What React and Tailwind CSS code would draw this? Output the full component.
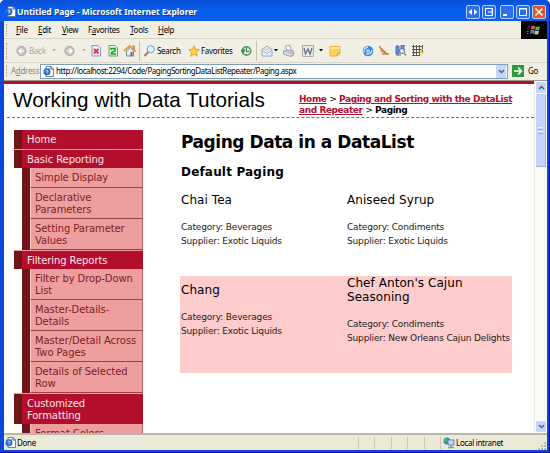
import React from "react";

function PageIcon({ className = "" }) {
  return (
    <svg className={"shrink-0 " + className} width="11" height="11" viewBox="0 0 11 11">
      <path d="M3 .5h5l2.500 2.500v7.500H3z" fill="#fff" stroke="#777f8c" />
      <path d="M8 .5V3h2.500" fill="none" stroke="#555e70" />
      <circle cx="4" cy="5.800" r="2.600" fill="none" stroke="#1764d8" strokeWidth="1.700" />
      <path d="M2 6h4.500" stroke="#1764d8" strokeWidth="1.200" />
      <path d="M.5 7.500C1 4 5 2 7.500 3" fill="none" stroke="#4b9bf0" strokeWidth=".9" />
    </svg>
  );
}

function Grip({ className = "" }) {
  return <div className={"w-px shrink-0 border-l border-dotted border-[#a5a293] " + className} />;
}

function TitleButton({ red, children, className = "" }) {
  return (
    <div className={"h-[14px] w-[14px] shrink-0 rounded-[2px] border border-[#b9cffb] " + (red ? "bg-[#e4552f] " : "bg-[#2c6fee] ") + className}>
      <svg width="12" height="12" viewBox="0 0 12 12" fill="none" stroke="#fff">{children}</svg>
    </div>
  );
}

function TitleBar() {
  return (
    <div className="flex h-[21px] shrink-0 items-center rounded-t-[5px] bg-linear-to-b from-[#0a4fd8] via-[#0560f0] to-[#0a5bea] pl-[5px] pt-[2px] text-white">
      <PageIcon />
      <div className="ml-px w-[183px] whitespace-nowrap font-['Noto_Sans','Open_Sans',sans-serif] text-[8.5px] font-bold leading-3 tracking-[-0.020px] [text-shadow:1px_1px_0_#0a3a9e]">
        Untitled Page - Microsoft Internet Explorer
      </div>
      <div className="ml-auto mr-[3px] flex">
        <TitleButton><path d="M5 3v6L1.500 6zM7 3v6l3.500-3z" fill="#fff" stroke="none" /></TitleButton>
        <TitleButton className="ml-[2px]"><path d="M2 2.500h8M2.500 2v7.500h7V7M9.500 2v3M5 6h5M8.500 4.500L10 6 8.500 7.500" /></TitleButton>
        <TitleButton className="ml-[4px]"><path d="M2 9h4" strokeWidth="2" /></TitleButton>
        <TitleButton className="ml-[2px]"><path d="M2.500 2.500h7v7h-7zM2 3h8" /></TitleButton>
        <TitleButton red className="ml-[2px]"><path d="M2.500 2.500l7 7M9.500 2.500l-7 7" strokeWidth="1.500" /></TitleButton>
      </div>
    </div>
  );
}

function MenuBar() {
  return (
    <div className="flex h-[18px] shrink-0 items-center border-b border-[#d9d6c6] pl-[2px]">
      <Grip className="h-3" />
      <div className="ml-[9px] flex w-[210px] whitespace-nowrap leading-3">
        <div className="w-[22px]"><u>F</u>ile</div>
        <div className="w-[24px]"><u>E</u>dit</div>
        <div className="w-[26px]"><u>V</u>iew</div>
        <div className="w-[42px]">F<u>a</u>vorites</div>
        <div className="w-[28px]"><u>T</u>ools</div>
        <div><u>H</u>elp</div>
      </div>
      <div className="-mb-px ml-auto flex h-[18px] w-[26px] items-center justify-center bg-black">
        <svg width="14" height="13" viewBox="0 0 14 13">
          <path d="M4.500 2q2-1 4 0l-.7 3.500q-2-1-4 0z" fill="#c55a45" />
          <path d="M9 2.200q2 1 4 0l-.8 3.500q-2 1-4 0z" fill="#4fb853" />
          <path d="M3.700 6.300q2-1 4 0L7 9.800q-2-1-4 0z" fill="#5680dc" />
          <path d="M8.100 6.500q2 1 4 0l-.8 3.500q-2 1-4 0z" fill="#d9c65a" />
          <path d="M.8 3h2M.4 5h2M0 7.500h2M0 9.500h2" stroke="#94638e" strokeDasharray="1 .6" />
        </svg>
      </div>
    </div>
  );
}

function Arrow({ gray, className = "" }) {
  return <svg className={"shrink-0 " + className} width="4" height="3" viewBox="0 0 4 3"><path d="M0 0h4L2 2.500z" fill={gray ? "#b3b1a6" : "#000"} /></svg>;
}

function Ico({ children, className = "" }) {
  return <svg className={"shrink-0 " + className} width="12" height="12" viewBox="0 0 12 12">{children}</svg>;
}

function Toolbar() {
  return (
    <div className="flex h-[24px] shrink-0 items-center whitespace-nowrap border-b border-[#d9d6c6] pl-[2px]">
      <Grip className="h-4" />
      <Ico className="ml-[9px]"><circle cx="5.500" cy="6" r="4.600" fill="#c2c1ba" stroke="#aaa9a2" /><path d="M8 6H3.500M5.500 3.500L3 6l2.500 2.500" fill="none" stroke="#fff" strokeWidth="1.500" /></Ico>
      <div className="ml-[1px] w-[20px] text-[#aaa99d]">Back</div>
      <Arrow gray className="ml-[3px]" />
      <Ico className="ml-[8px]"><circle cx="5.500" cy="6" r="4.600" fill="#c2c1ba" stroke="#aaa9a2" /><path d="M3 6h4.500M5.500 3.500L8 6 5.500 8.500" fill="none" stroke="#fff" strokeWidth="1.500" /></Ico>
      <Arrow gray className="ml-[6px]" />
      <Ico className="ml-[5px]"><path d="M1 .5h6L9.500 3v8H1z" fill="#e9f0ff" stroke="#7e9bce" /><path d="M3 4l4.500 4.500M7.500 4L3 8.500" stroke="#e33" strokeWidth="1.900" /></Ico>
      <Ico className="ml-[5px]"><path d="M1 .5h6L9.500 3v8H1z" fill="#eaffea" stroke="#55a763" /><path d="M3 5V3.500h4V6L3.500 7.500V9H8" fill="none" stroke="#149929" strokeWidth="1.500" /></Ico>
      <Ico className="ml-[4px]"><path d="M2.500 6v5h7V6L6.500 2.500z" fill="#e2ebff" stroke="#6c86b6" /><path d="M0 6L5.500 1 12 6.500" fill="none" stroke="#e99c35" strokeWidth="1.800" /><path d="M8.500 1h1.500v3" stroke="#b04b32" fill="none" /><path d="M6.500 7h2v4h-2z" fill="#9b6137" /></Ico>
      <div className="ml-[3px] h-5 w-px shrink-0 bg-[#c7c4b4]" />
      <Ico className="ml-[4px]"><path d="M4.500 7L.5 11" stroke="#a9794c" strokeWidth="2" /><circle cx="6.800" cy="4.200" r="3.600" fill="#d8f0ff" stroke="#6e9bd5" /><path d="M5 4q.5-2 2-2" stroke="#fff" fill="none" /></Ico>
      <div className="ml-px w-[26px]">Search</div>
      <Ico className="ml-[5px]"><path d="M6 .7l1.500 3.500 4 .4-3 2.700.9 4L6 9.200l-3.400 2.100.9-4-3-2.700 4-.4z" fill="#ffd34d" stroke="#d99a24" strokeWidth=".8" /></Ico>
      <div className="ml-px w-[34px]">Favorites</div>
      <Ico className="ml-[5px]"><circle cx="6.500" cy="6" r="4.200" fill="#e3f4e3" stroke="#59a061" strokeWidth="1.800" /><path d="M6.500 3v3.500H9" fill="none" stroke="#445566" /><path d="M.5 5l3 3.500L5.500 4z" fill="#219b35" /></Ico>
      <div className="ml-[4px] h-5 w-px shrink-0 bg-[#c7c4b4]" />
      <Ico className="ml-[4px]"><path d="M1 4.500L6 1l5 3.500V11H1z" fill="#e7f1ff" stroke="#8aa9d2" /><path d="M1 5l5 3.500L11 5" fill="#fff" stroke="#8aa9d2" /><path d="M3 3h6v2L6 7 3 5z" fill="#e5d3c6" /></Ico>
      <Arrow className="ml-px" />
      <Ico className="ml-[5px]"><path d="M2.500 1l4.500-.5 1.500 5H3.500z" fill="#fff" stroke="#8ba7cc" /><path d="M.5 6l2-1H9l1.500 2v3L8 11.500.5 9z" fill="#c2c5cb" stroke="#969ca7" /><path d="M1.500 8l6 2" stroke="#fff" /></Ico>
      <Ico className="ml-[7px]"><path d="M.5.5h11v11H.5z" fill="#e9e9e9" stroke="#aaa" /><path d="M2 3l1.500 6L6 4l2 5 2-6" fill="none" stroke="#6b717d" strokeWidth="1.300" /></Ico>
      <Arrow className="ml-[5px]" />
      <Ico className="ml-[6px]"><path d="M1 1.500h10v7L8.500 11H1z" fill="#ffd15c" stroke="#e6b341" /><path d="M1.500 2h9v2h-9z" fill="#ffe99a" /><path d="M8.500 11V8.500H11" fill="#fff0b8" stroke="#d6a32d" /></Ico>
      <Ico className="ml-[21px]"><circle cx="6" cy="6" r="5.300" fill="#3c84d8" /><path d="M2 8Q1 3 6 2M4 9q5 1 6-4" fill="none" stroke="#c5e6ff" strokeWidth="1.300" /><circle cx="6" cy="6" r="2" fill="#9dd1ff" /></Ico>
      <Ico className="ml-[4px]"><path d="M1 1l2 6 8 3-4-4-3-1z" fill="#df9348" /><path d="M1 1l7 7M4 9h7" stroke="#a36229" fill="none" /></Ico>
      <Ico className="ml-[5px]"><path d="M1 1h3v8H1zM6 0h3v5H6z" fill="#6c93c9" stroke="#4b6c9c" /><circle cx="7" cy="6" r="2.500" fill="#ddeeff" stroke="#4677b6" /><path d="M9 8l2 2.500" stroke="#b59142" strokeWidth="1.800" /><path d="M1 10h5" stroke="#4b6c9c" /></Ico>
      <Ico className="ml-[5px]"><path d="M0 1.500h11M0 4.500h11M0 7.500h11M0 10.500h7M1.500 0v11M4.500 0v11M7.500 0v11M10.500 0v8" stroke="#4c4c46" strokeWidth=".9" /><path d="M10 4L7.500 8H10l-2 4 4-5H9.500L11 4z" fill="#f5c325" /></Ico>
    </div>
  );
}

function AddressBar() {
  return (
    <div className="flex h-[16px] shrink-0 items-center whitespace-nowrap pl-[2px]">
      <Grip className="h-3" />
      <div className="ml-[4px] w-[29px] tracking-[-0.300px] text-[#8c8a7d]">A<u>d</u>dress</div>
      <div className="flex h-[15px] w-[468px] shrink-0 items-center border border-[#7f9db9] bg-white pl-[2px]">
        <PageIcon />
        <div className="ml-[2px] tracking-[-0.440px]">http://localhost:2294/Code/PagingSortingDataListRepeater/Paging.aspx</div>
        <div className="ml-auto mr-px flex h-[13px] w-[10px] items-center justify-center bg-[#c6d6fb]">
          <svg width="7" height="5" viewBox="0 0 7 5"><path d="M1 1l2.500 2.500L6 1" fill="none" stroke="#4d6185" strokeWidth="1.500" /></svg>
        </div>
      </div>
      <svg className="ml-[4px] shrink-0" width="12" height="12" viewBox="0 0 12 12"><path d="M0 0h12v12H0z" fill="#2d9b38" /><path d="M2 6h7M6 2.500L9.500 6 6 9.500" fill="none" stroke="#fff" strokeWidth="1.600" /></svg>
      <div className="ml-[4px]">Go</div>
    </div>
  );
}

function Group({ children, tall, first }) {
  return (
    <div className={"flex w-[129px] shrink-0 border-r border-[#a8142f] bg-[#b40e2f] text-[#ffe6ea] " + (tall ? "h-[31px] " : "h-[19px] ") + (first ? "" : "border-t border-t-[#e99aa5]")}>
      <div className="w-[8px] shrink-0 bg-[#701417]" />
      <div className={"pl-[5px] leading-[12px] " + (first ? "pt-[4px]" : "pt-[3.600px]")}>{children}</div>
    </div>
  );
}

function Item({ children, single }) {
  return (
    <div className={"ml-[8px] flex w-[121px] shrink-0 border-r border-[#b5606a] bg-[#ef9e9f] text-[#7d2028] " + (single ? "h-[20px]" : "h-[31px]")}>
      <div className="w-[8px] shrink-0 bg-[#701417]" />
      <div className="flex-1 border-b border-l border-b-[#96444a] border-l-[#f8c6c6] pl-[4px] pt-[4px] leading-[12px]">{children}</div>
    </div>
  );
}

function Sidebar() {
  return (
    <div className="flex h-[303px] w-[129px] shrink-0 flex-col overflow-hidden whitespace-nowrap font-['DejaVu_Sans',sans-serif] text-[10px] tracking-[-0.080px]">
      <Group first>Home</Group>
      <Group>Basic Reporting</Group>
      <Item single>Simple Display</Item>
      <Item>Declarative<br />Parameters</Item>
      <Item>Setting Parameter<br />Values</Item>
      <Group>Filtering Reports</Group>
      <Item>Filter by Drop-Down<br />List</Item>
      <Item>Master-Details-<br />Details</Item>
      <Item>Master/Detail Across<br />Two Pages</Item>
      <Item>Details of Selected<br />Row</Item>
      <Group tall>Customized<br />Formatting</Group>
      <Item>Format Colors</Item>
    </div>
  );
}

function Product({ name, category, supplier }) {
  return (
    <div className="w-[166px] shrink-0">
      <h3 className="text-[12px] leading-[14px] tracking-[0.060px] text-black">{name}</h3>
      <p className="mt-[13px] text-[9px] leading-[14px] tracking-[-0.160px] text-[#222]">Category: {category}<br />Supplier: {supplier}</p>
    </div>
  );
}

function Content() {
  return (
    <div className="ml-[37px] w-[333px] whitespace-nowrap pt-px font-['DejaVu_Sans',sans-serif] text-black">
      <h1 className="pl-px text-[17px] font-bold leading-[22px] tracking-[-0.450px]">Paging Data in a DataList</h1>
      <h2 className="mt-[11px] pl-px text-[12px] font-bold leading-[16px] tracking-[0.180px]">Default Paging</h2>
      <div className="mt-[13px] flex pl-px">
        <Product name="Chai Tea" category="Beverages" supplier="Exotic Liquids" />
        <Product name="Aniseed Syrup" category="Condiments" supplier="Exotic Liquids" />
      </div>
      <div className="mt-[28px] flex h-[97px] w-[332px] bg-[#ffcccc] pl-px">
        <div className="pt-[7px]"><Product name="Chang" category="Beverages" supplier="Exotic Liquids" /></div>
        <Product name={<>Chef Anton's Cajun<br />Seasoning</>} category="Condiments" supplier="New Orleans Cajun Delights" />
      </div>
    </div>
  );
}

function WebPage() {
  return (
    <div className="h-[352px] w-[530px] shrink-0 overflow-hidden border-t-[3px] border-[#b40e2f] bg-white">
      <div className="ml-[3px] flex h-[34px] border-b border-dashed border-[#c04a5c]">
        <div className="w-[292px] shrink-0 whitespace-nowrap pl-[6px] pt-[4px] font-['Liberation_Sans',Arial,sans-serif] text-[20.700px] leading-[24px] tracking-[0.020px] text-black">Working with Data Tutorials</div>
        <div className="whitespace-nowrap pt-[10px] font-['DejaVu_Sans',sans-serif] text-[9px] font-bold leading-[11px] tracking-[-0.420px] text-black">
          <span className="text-[#b40e2f] underline">Home</span> <span className="font-normal">&gt;</span> <span className="text-[#b40e2f] underline">Paging and Sorting with the DataList</span><br />
          <span className="text-[#b40e2f] underline">and Repeater</span> <span className="font-normal">&gt;</span> Paging
        </div>
      </div>
      <div className="flex pl-[10px] pt-[12px]">
        <Sidebar />
        <Content />
      </div>
    </div>
  );
}

function ScrollButton({ up }) {
  return (
    <div className="flex h-[11px] w-[10px] shrink-0 items-center justify-center rounded-[1px] bg-[#c6d6fb]">
      <svg width="7" height="5" viewBox="0 0 7 5"><path d={up ? "M1 4l2.500-2.500L6 4" : "M1 1l2.500 2.500L6 1"} fill="none" stroke="#4d6185" strokeWidth="1.500" /></svg>
    </div>
  );
}

function Scrollbar() {
  return (
    <div className="flex flex-1 flex-col items-center border-l border-[#eeede5] bg-[#fbfaf6] pt-px">
      <ScrollButton up />
      <div className="mt-px flex h-[73px] w-[10px] flex-col items-center justify-center gap-px rounded-[1px] border-r border-b border-[#9db5e8] bg-[#c3d5fd]">
        <div className="h-px w-[5px] bg-[#eef4fe]" />
        <div className="h-px w-[5px] bg-[#8cb0f8]" />
        <div className="h-px w-[5px] bg-[#eef4fe]" />
        <div className="h-px w-[5px] bg-[#8cb0f8]" />
      </div>
      <div className="mb-px mt-auto"><ScrollButton /></div>
    </div>
  );
}

function StatusBar() {
  return (
    <div className="flex h-[17px] shrink-0 items-center border-t-2 border-[#b8b8a8] bg-[#ece9d8]">
      <PageIcon className="ml-px" />
      <div className="ml-px w-[341px] leading-3">Done</div>
      <div className="flex flex-1 gap-[15.400px]">
        <i className="h-3 w-px bg-[#cbc8b7]" /><i className="h-3 w-px bg-[#cbc8b7]" /><i className="h-3 w-px bg-[#cbc8b7]" /><i className="h-3 w-px bg-[#cbc8b7]" /><i className="h-3 w-px bg-[#cbc8b7]" /><i className="h-3 w-px bg-[#cbc8b7]" />
      </div>
      <Ico><circle cx="4" cy="4" r="3.500" fill="#3186cb" /><path d="M2 1l3 1-1 3-3-1z" fill="#4fbb50" /><path d="M5 3h6v5H5z" fill="#b9d9f8" stroke="#638fbd" /><path d="M5 10.500h6M8 8v2" stroke="#8796aa" strokeWidth="1.500" /></Ico>
      <div className="ml-[1px] w-[82px] leading-3">Local intranet</div>
      <svg className="mr-px mt-auto shrink-0" width="8" height="8" viewBox="0 0 8 8"><path d="M6 0h2v2H6zM3 3h2v2H3zM6 3h2v2H6zM0 6h2v2H0zM3 6h2v2H3zM6 6h2v2H6z" fill="#bbb7a2" /></svg>
    </div>
  );
}

export default function App() {
  return (
    <div className="flex h-[453px] w-[550px] flex-col overflow-hidden rounded-t-[5px] border-b border-r border-[#0018a0] bg-[#0a48dc] font-['Noto_Sans','Open_Sans',sans-serif] text-[8px] tracking-[-0.300px] text-black">
      <TitleBar />
      <div className="mb-[2px] ml-[4px] mr-[2px] flex flex-1 flex-col bg-[#f1efe3]">
        <MenuBar />
        <Toolbar />
        <AddressBar />
        <div className="mt-px h-px shrink-0 bg-[#9d9b8c]" />
        <div className="flex h-[352px] shrink-0">
          <WebPage />
          <Scrollbar />
        </div>
        <StatusBar />
      </div>
    </div>
  );
}
